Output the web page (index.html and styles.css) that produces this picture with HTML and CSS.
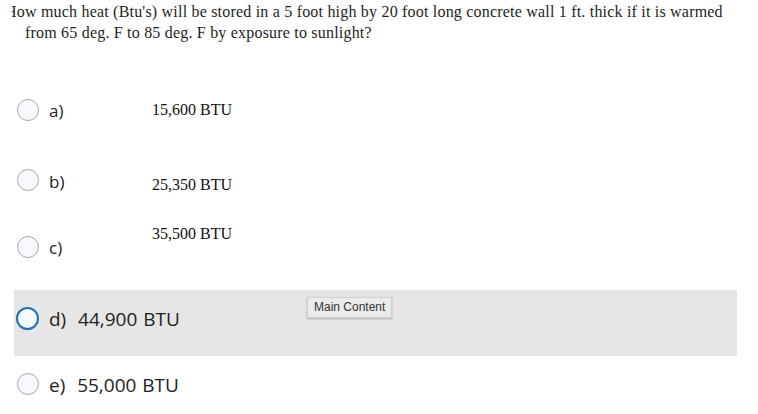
FILE: index.html
```html
<!DOCTYPE html>
<html lang="en">
<head>
<meta charset="utf-8">
<title>Question</title>
<link rel="stylesheet" href="styles.css">
</head>
<body>
<div class="question">
  <p class="prompt">How much heat (Btu's) will be stored in a 5 foot high by 20 foot long concrete wall 1 ft. thick if it is warmed from 65 deg. F to 85 deg. F by exposure to sunlight?</p>
</div>
<div class="options">
  <div class="row row-a">
    <span class="radio"></span>
    <span class="label">a)</span>
    <span class="answer">15,600 BTU</span>
  </div>
  <div class="row row-b">
    <span class="radio"></span>
    <span class="label">b)</span>
    <span class="answer">25,350 BTU</span>
  </div>
  <div class="row row-c">
    <span class="radio"></span>
    <span class="label">c)</span>
    <span class="answer">35,500 BTU</span>
  </div>
  <div class="row row-d">
    <span class="radio radio-focus"></span>
    <span class="label label-big">d)&nbsp; 44,900 BTU</span>
    <span class="tip">Main Content</span>
  </div>
  <div class="row row-e">
    <span class="radio"></span>
    <span class="label label-big">e)&nbsp; 55,000 BTU</span>
  </div>
</div>
</body>
</html>
```

FILE: styles.css
```css
html, body {
  margin: 0;
  padding: 0;
  background: #ffffff;
}

.question {
  margin-left: 12px;
  overflow: hidden;
  padding-top: 1px;
}

.prompt {
  margin: 0;
  padding-left: 13px;
  text-indent: -20px;
  font-family: "Liberation Serif", "Times New Roman", serif;
  font-size: 16px;
  letter-spacing: 0.2px;
  line-height: 21px;
  color: #1e1e1e;
  width: 720px;
}

.options {
  display: flex;
  flex-direction: column;
  margin: 0 21px 0 14px;
}

.row {
  display: flex;
  align-items: flex-start;
  padding-left: 3px;
  font-family: "Open Sans", "Noto Sans", sans-serif;
  color: #222222;
}

.radio {
  flex: none;
  width: 20px;
  height: 20px;
  border: 1px solid #a9a9a9;
  border-radius: 50%;
  background: #f7f8fb;
}

.radio-focus {
  width: 19px;
  height: 19px;
  border: 2px solid #1f6fb2;
  margin-left: -1px;
}

.label {
  margin-left: 10px;
  font-size: 17px;
  line-height: 22px;
  width: 103px;
}

.label-big {
  width: auto;
  font-size: 19px;
  word-spacing: 1px;
}

.answer {
  font-family: "Liberation Serif", "Times New Roman", serif;
  font-size: 16px;
  line-height: 22px;
  color: #111111;
}

.row-a {
  margin-top: 56px;
  height: 24px;
}
.row-a .label { margin-top: 1px; }
.row-a .answer { margin-top: 0; }

.row-b {
  margin-top: 46px;
  height: 24px;
}
.row-b .label { margin-top: 2px; }
.row-b .answer { margin-top: 5px; }

.row-c {
  margin-top: 30px;
  height: 36px;
}
.row-c .radio { margin-top: 13px; }
.row-c .label { margin-top: 14px; }

.row-d {
  position: relative;
  margin-top: 31px;
  height: 66px;
  background: #e6e6e6;
}
.row-d .radio { margin-top: 17px; }
.row-d .label { margin-top: 18px; }

.tip {
  position: absolute;
  left: 293px;
  top: 7px;
  padding: 2px 6px;
  font-family: "Liberation Sans", Arial, sans-serif;
  font-size: 12px;
  line-height: 15px;
  color: #333333;
  background: #ebebeb;
  border: 1px solid #cfcfcf;
  box-shadow: 0 1px 2px rgba(0, 0, 0, 0.25);
}

.row-e {
  margin-top: 17px;
  height: 24px;
}
.row-e .label { margin-top: 1px; }
```
